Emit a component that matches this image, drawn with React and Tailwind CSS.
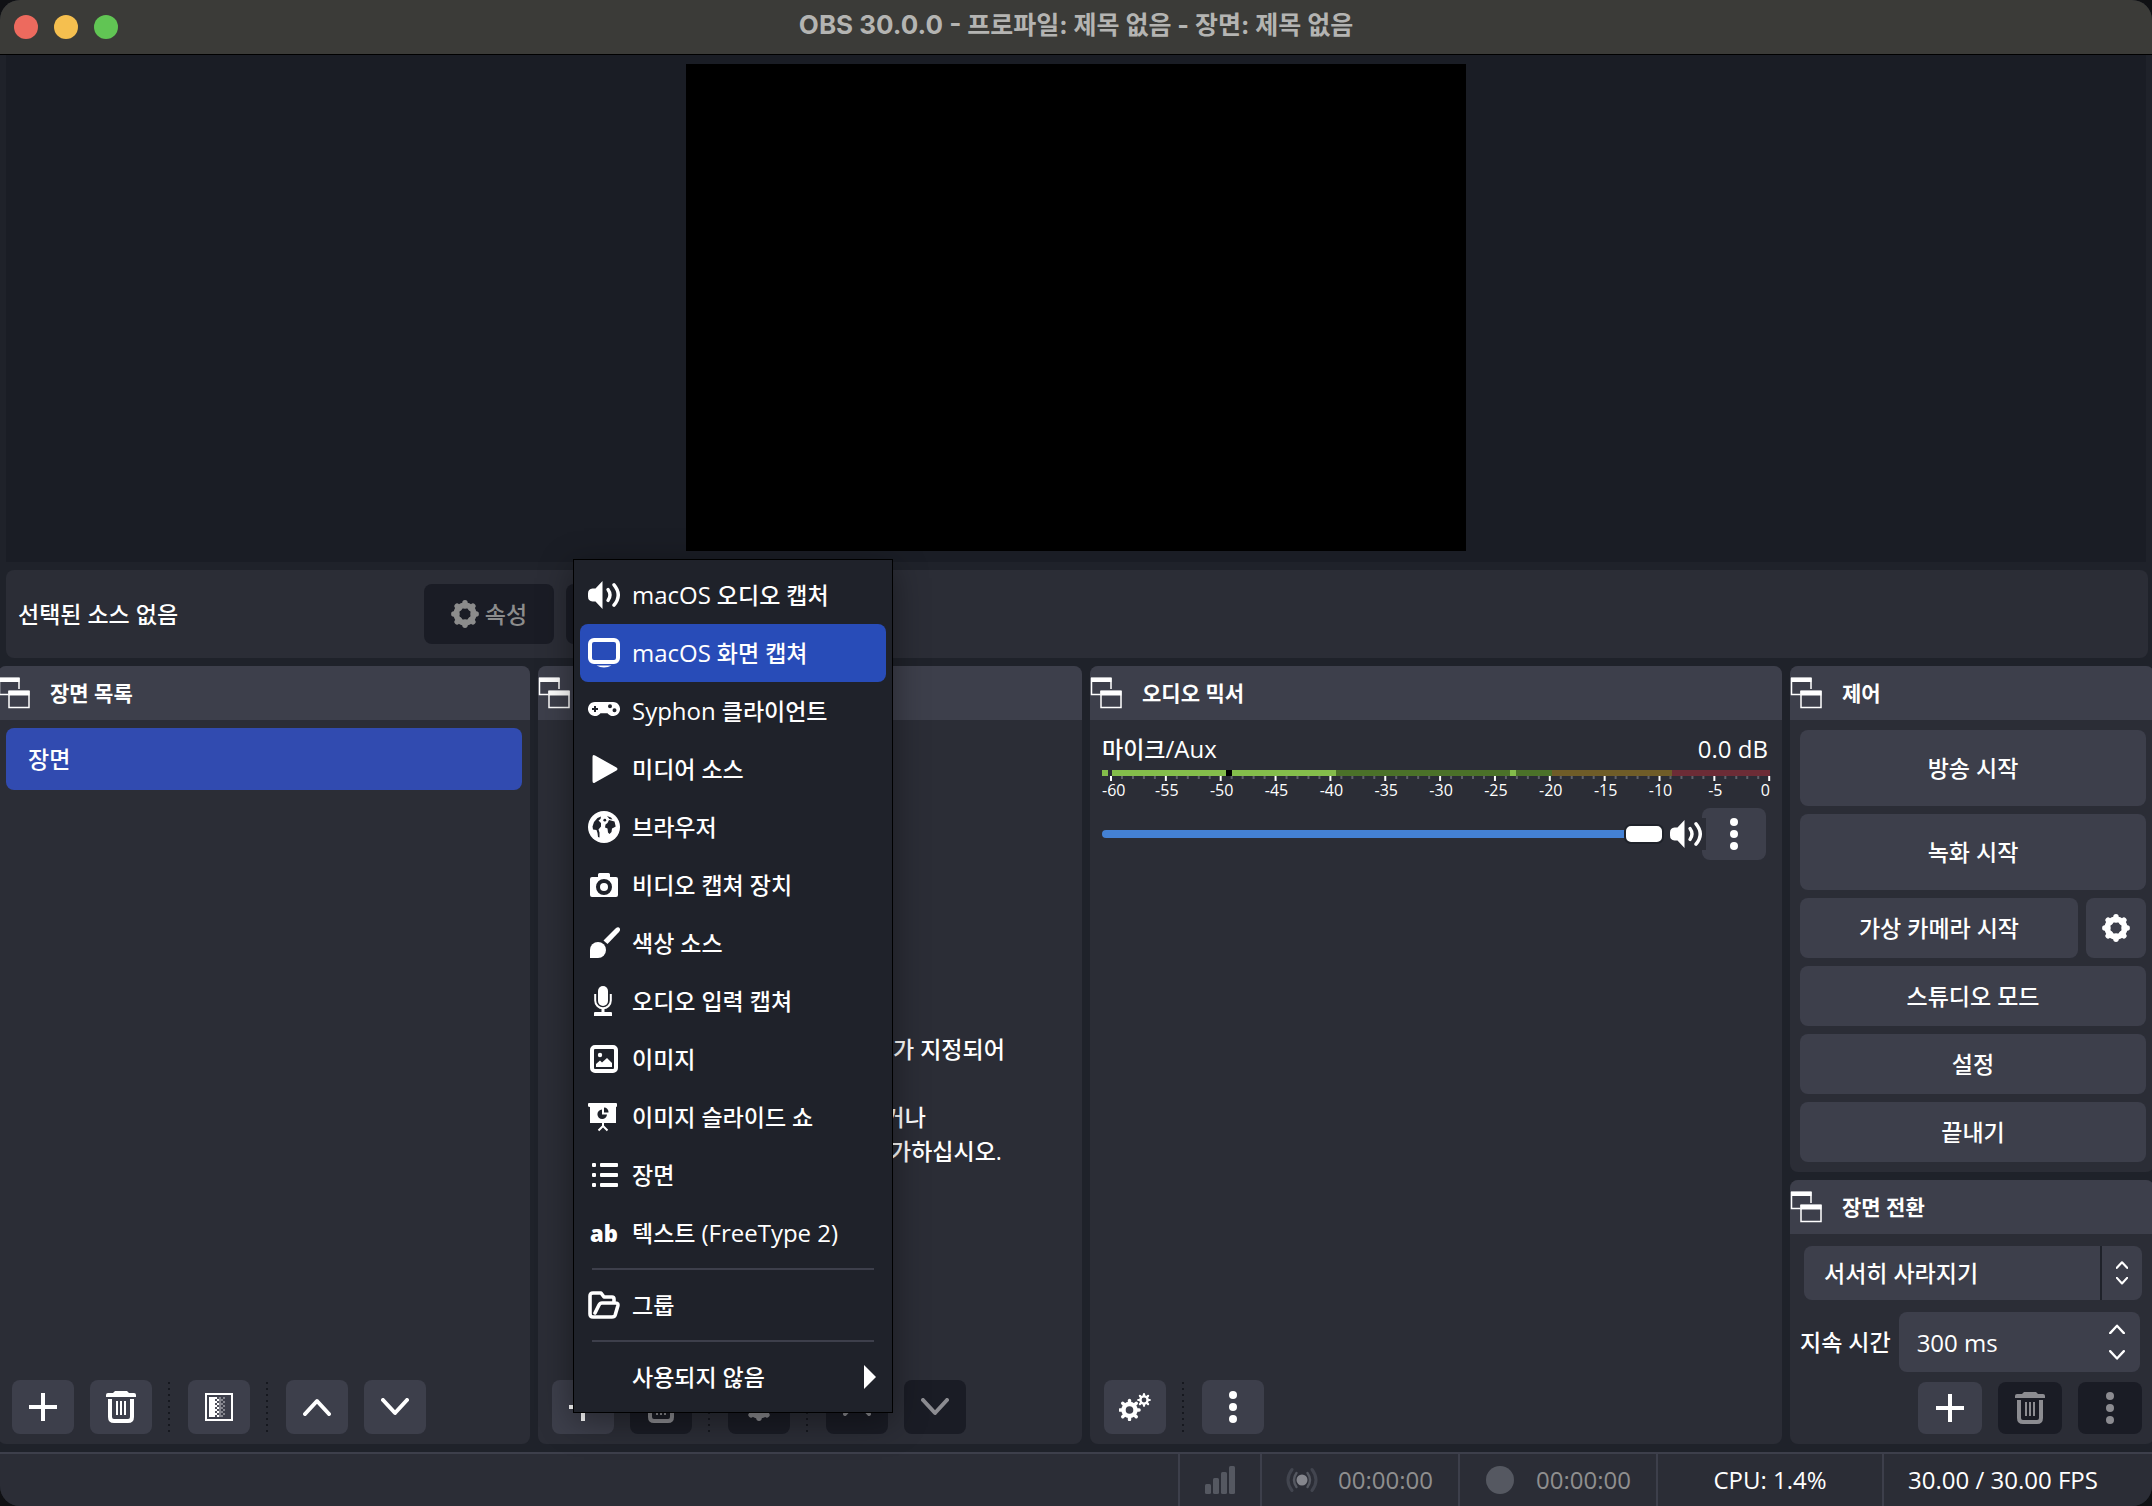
import React from "react";

const GEAR_ANGLES = [0, 45, 90, 135, 180, 225, 270, 315];

function Gear({ className }) {
  return (
    <svg className={className} viewBox="0 0 28 28" fill="none" stroke="currentColor">
      <circle cx="14" cy="14" r="8.75" strokeWidth="5.5" />
      {GEAR_ANGLES.map((a) => (
        <line key={a} x1="14" y1="2.8" x2="14" y2="6" strokeWidth="5.4" strokeLinecap="round" transform={`rotate(${a} 14 14)`} />
      ))}
    </svg>
  );
}

function Gears({ className }) {
  return (
    <svg className={className} viewBox="0 0 32 28" fill="none" stroke="currentColor">
      <circle cx="10.5" cy="17" r="6" strokeWidth="4.4" />
      {GEAR_ANGLES.map((a) => (
        <line key={a} x1="10.5" y1="7.4" x2="10.5" y2="10" strokeWidth="3.4" strokeLinecap="round" transform={`rotate(${a} 10.5 17)`} />
      ))}
      <circle cx="25" cy="7" r="3.6" strokeWidth="2.4" />
      {GEAR_ANGLES.map((a) => (
        <line key={a} x1="25" y1="1.2" x2="25" y2="3" strokeWidth="2.2" strokeLinecap="round" transform={`rotate(${a} 25 7)`} />
      ))}
    </svg>
  );
}

function Plus() {
  return (
    <svg className="size-7" viewBox="0 0 28 28" fill="currentColor">
      <path d="M12 0h4v12h12v4H16v12h-4V16H0v-4h12z" />
    </svg>
  );
}

function Trash() {
  return (
    <svg className="size-8" viewBox="0 0 32 32" fill="currentColor">
      <path d="M10 0h12l2 2h5q2 0 2 2v2H1V4q0-2 2-2h5z" />
      <path d="M5 8v18q0 4 4 4h14q4 0 4-4V8" fill="none" stroke="currentColor" strokeWidth="4" />
      <path d="M11 10h2v14h-2zM15 10h2v14h-2zM19 10h2v14h-2z" />
    </svg>
  );
}

function Transition() {
  const rows = [0, 1, 2, 3, 4, 5, 6, 7, 8, 9];
  return (
    <svg className="size-7" viewBox="0 0 28 28" fill="currentColor" shapeRendering="crispEdges">
      <path d="M1 1h26v26H1z" fill="none" stroke="currentColor" strokeWidth="2" />
      <path d="M4 4h6v20H4z" />
      <path d="M14 4h2v20h-2z" fill="#85868e" />
      {rows.map((r) => (
        <g key={r}>
          <rect x={r % 2 ? 12 : 10} y={4 + r * 2} width="2" height="2" />
          <rect x={r % 2 ? 10 : 12} y={4 + r * 2} width="2" height="2" fill="#4d4e59" />
          <rect x={r % 2 ? 16 : 18} y={4 + r * 2} width="2" height="2" fill="#85868e" />
        </g>
      ))}
    </svg>
  );
}

function Chevron({ up, className, width = 4 }) {
  return (
    <svg className={className} viewBox="0 0 28 18" fill="none" stroke="currentColor" strokeWidth={width} strokeLinecap="round" strokeLinejoin="round">
      <path d={up ? "M2 16 14 3 26 16" : "M2 2 14 15 26 2"} />
    </svg>
  );
}

function Kebab() {
  return (
    <svg className="h-8 w-2" viewBox="0 0 8 32" fill="currentColor">
      <circle cx="4" cy="4" r="4" />
      <circle cx="4" cy="16" r="4" />
      <circle cx="4" cy="28" r="4" />
    </svg>
  );
}

function Speaker() {
  return (
    <svg className="h-7 w-8" viewBox="0 0 32 28" fill="none" stroke="currentColor" strokeLinecap="round">
      <path d="M14.5 0v28L7.5 20.5H4.5Q0 20 0 15.500V12.500Q0 8 4.500 7.500H7.500z" fill="currentColor" stroke="none" />
      <path d="M20 8.500q4 5.500 0 11" strokeWidth="3.400" />
      <path d="M26 3.800q8.500 10.200 0 20.400" strokeWidth="3.400" />
    </svg>
  );
}

function DockIcon() {
  return (
    <svg className="h-8 w-8 shrink-0" viewBox="0 0 32 32" fill="none" stroke="#fff" strokeWidth="1.500">
      <path d="M10.500 17.500H1.500V1.500H21V12" />
      <path d="M1 .5h20.500V5H1z" fill="#fff" stroke="none" />
      <path d="M11 14.500h20v16H11z" />
      <path d="M10.500 13.500h21V18.500h-21z" fill="#fff" stroke="none" />
    </svg>
  );
}

const ICON = "h-8 w-8";

const icons = {
  monitor: (
    <svg className={ICON} viewBox="0 0 32 32">
      <rect x="2" y="3" width="28" height="22" rx="4" fill="none" stroke="#fff" strokeWidth="4" />
      <path d="M8.500 28.500h15q-3.500 2-7.500 2t-7.500-2z" fill="#fff" />
    </svg>
  ),
  gamepad: (
    <svg className={ICON} viewBox="0 0 32 32">
      <path fill="#fff" fillRule="evenodd" d="M7 7h18a7 7 0 1 1-5.500 11.300h-7A7 7 0 1 1 7 7zM6 11v2H4v2h2v2h2v-2h2v-2H8v-2zM22 9.200a2 2 0 1 0 0 4 2 2 0 0 0 0-4zM26.500 13.300a2 2 0 1 0 0 4 2 2 0 0 0 0-4z" />
    </svg>
  ),
  play: (
    <svg className={ICON} viewBox="0 0 32 32">
      <path fill="#fff" d="M4.500 4q0-3 2.600-1.500L28.500 14.500q2 1.500 0 3L7.100 29.500Q4.500 31 4.500 28z" />
    </svg>
  ),
  globe: (
    <svg className={ICON} viewBox="0 0 32 32">
      <circle cx="16" cy="16" r="16" fill="#fff" />
      <path fill="#1f222a" d="M4.500 15.500 6 11l3.500-4 3.500-1.500-.5 2.500-2 1.500 2.500 2.500v3.500l-2.500 3 1 3v5l-1.500-.5-.5-4-1-3-3.500-.5z" />
      <circle cx="16.800" cy="9.200" r="1.400" fill="#1f222a" />
      <path fill="#1f222a" d="m19 5 4 1.500 1.500 2-3-.5zM17.500 13.500l2-1.500 1.500-3 5.500 1.500 1.200 5-1.700 1-2 1-.5 3.500-2 2-1.500-1.500-.5-4-2.500-1z" />
    </svg>
  ),
  camera: (
    <svg className={ICON} viewBox="0 0 32 32">
      <path fill="#fff" fillRule="evenodd" d="M11.500 4h9q1.500 0 1.500 1.500V8h6q2 0 2 2v16q0 2-2 2H4q-2 0-2-2V10q0-2 2-2h6V5.500Q10 4 11.500 4zM16 10a8 8 0 1 0 0 16 8 8 0 0 0 0-16z" />
      <circle cx="16" cy="18" r="4" fill="#fff" />
    </svg>
  ),
  brush: (
    <svg className={ICON} viewBox="0 0 32 32" fill="#fff">
      <path d="M2 31V23a8 8 0 1 1 8 8z" />
      <path d="m15.500 13.500 12-12q3-2.500 4.300 0 .8 1.800-.8 3.500L19.500 17z" />
    </svg>
  ),
  mic: (
    <svg className={ICON} viewBox="0 0 32 32" fill="#fff">
      <rect x="10" y="1" width="10" height="20" rx="5" />
      <path d="M7.200 9v6.500a7.800 7.800 0 0 0 15.600 0V9" fill="none" stroke="#fff" strokeWidth="2" />
      <path d="M13.500 23h3v4H23q1 0 1 1v3H6v-3q0-1 1-1h6.500z" />
    </svg>
  ),
  image: (
    <svg className={ICON} viewBox="0 0 32 32" fill="#fff">
      <rect x="4" y="4" width="24" height="24" rx="3" fill="none" stroke="#fff" strokeWidth="4" />
      <circle cx="12" cy="12" r="2.200" />
      <path d="M8 24v-3l4-3.500 2 2 5-4.500 5 5v4z" />
    </svg>
  ),
  slides: (
    <svg className={ICON} viewBox="0 0 32 32" fill="#fff">
      <path d="M1 2h27q1 0 1 1v2q0 1-1 1v16H2V6Q0 6 0 5V3q0-1 1-1z" />
      <path d="M14 8.500a4.800 4.800 0 1 0 5 5h-5z" fill="#1f222a" />
      <path d="M16 6.500v5h4.500a4.500 4.500 0 0 0-4.500-5z" fill="#1f222a" />
      <path d="M15 21v5m0-1-4.500 4.500M15 25l4.500 4.500" fill="none" stroke="#fff" strokeWidth="2" />
    </svg>
  ),
  list: (
    <svg className={ICON} viewBox="0 0 32 32" fill="#fff">
      {[4, 14, 24].map((y) => (
        <g key={y}>
          <rect x="4" y={y} width="4" height="4" rx="1" />
          <rect x="12" y={y} width="18" height="4" rx="1" />
        </g>
      ))}
    </svg>
  ),
  folder: (
    <svg className={ICON} viewBox="0 0 32 32" fill="none" stroke="#fff" strokeWidth="3.600" strokeLinejoin="round">
      <path d="M26 13V10q0-2-2-2H16l-3-4H5Q2 4 2 7v18q0 3 3 3h19q2.500 0 3.200-2l2.600-9q.7-3-2-3H14q-2 0-3 2l-4 8" strokeLinecap="round" />
    </svg>
  ),
};

const LATIN = "text-[24px] font-normal";

const MENU = [
  { icon: <Speaker />, label: <><span className={LATIN}>macOS</span> 오디오 캡처</> },
  { icon: icons.monitor, label: <><span className={LATIN}>macOS</span> 화면 캡쳐</>, active: true },
  { icon: icons.gamepad, label: <><span className={LATIN}>Syphon</span> 클라이언트</> },
  { icon: icons.play, label: "미디어 소스" },
  { icon: icons.globe, label: "브라우저" },
  { icon: icons.camera, label: "비디오 캡쳐 장치" },
  { icon: icons.brush, label: "색상 소스" },
  { icon: icons.mic, label: "오디오 입력 캡쳐" },
  { icon: icons.image, label: "이미지" },
  { icon: icons.slides, label: "이미지 슬라이드 쇼" },
  { icon: icons.list, label: "장면" },
  { icon: <span aria-hidden="true" className="text-[22px] font-extrabold">ab</span>, label: <>텍스트 <span className={LATIN}>(FreeType 2)</span></> },
];

function MenuItem({ icon, label, active, submenu }) {
  return (
    <button
      role="menuitem"
      className={`flex h-[58px] w-full items-center gap-3 rounded-lg px-2 text-left text-white ${active ? "bg-[#284cb8]" : ""}`}
    >
      <span className="flex w-8 shrink-0 items-center justify-center">{icon}</span>
      <span className="flex-1 whitespace-nowrap">{label}</span>
      {submenu && (
        <svg className="mr-0.5 h-6 w-3" viewBox="0 0 12 24" fill="#fff">
          <path d="M0 0l12 12L0 24z" />
        </svg>
      )}
    </button>
  );
}

function SourceMenu() {
  return (
    <div
      role="menu"
      className="absolute bottom-[31px] left-[35px] z-20 w-[320px] border border-black bg-[#1f222a] p-1.5 shadow-[0_8px_32px_rgba(0,0,0,0.4)]"
    >
      {MENU.map((m, i) => (
        <MenuItem key={i} {...m} />
      ))}
      <hr className="mx-3 my-1.5 border-t-2 border-[#3d3f4b]" />
      <MenuItem icon={icons.folder} label="그룹" />
      <hr className="mx-3 my-1.5 border-t-2 border-[#3d3f4b]" />
      <MenuItem label="사용되지 않음" submenu />
    </div>
  );
}

function ToolButton({ label, disabled, className = "h-[54px] w-[62px]", children }) {
  return (
    <button
      aria-label={label}
      disabled={disabled}
      className={`flex shrink-0 items-center justify-center rounded-lg ${className} ${disabled ? "bg-[#1a1c25] text-[#8c8c91]" : "bg-[#3d3f4b] text-white"}`}
    >
      {children}
    </button>
  );
}

function Dots() {
  return (
    <svg className="h-[50px] w-1 shrink-0" viewBox="0 0 4 50" shapeRendering="crispEdges">
      <path d="M1 0V50" stroke="#16181f" strokeWidth="2" strokeDasharray="2 4" />
    </svg>
  );
}

function Dock({ title, className = "", children }) {
  return (
    <section className={`flex min-w-0 flex-col rounded-lg bg-[#2b2d36] ${className}`}>
      <header className="flex h-[54px] shrink-0 items-center gap-5 rounded-t-lg bg-[#3d3f4b]">
        <DockIcon />
        <h2 className="text-[21px] font-bold">{title}</h2>
      </header>
      {children}
    </section>
  );
}

const SEGMENTS = [
  [6, "bg-[#84bd4b]"],
  [4, "bg-[#2b2d36]"],
  [114, "bg-[#84bd4b]"],
  [6, "bg-black"],
  [104, "bg-[#84bd4b]"],
  [174, "bg-[#4b7129]"],
  [6, "bg-[#84bd4b]"],
  [36, "bg-[#4b7129]"],
  [120, "bg-[#6f5c28]"],
  [98, "bg-[#6c2c36]"],
];

function Meter() {
  const ticks = Array.from({ length: 61 }, (_, i) => i);
  const pos = (i, shift = 0) => `${(((9 + shift + i * 10.97) / 668) * 100).toFixed(3)}%`;
  return (
    <div>
      <div className="flex h-1.5">
        {SEGMENTS.map(([w, c], i) => (
          <div key={i} className={c} style={{ flex: w }} />
        ))}
      </div>
      <svg className="h-7 w-full overflow-visible font-normal" fontFamily="Open Sans" fontSize="16">
        {ticks.map((i) => (
          <line key={i} x1={pos(i)} x2={pos(i)} y1="0" y2={i % 5 ? 3 : 5} stroke={i % 5 ? "#60626b" : "#fff"} strokeWidth="2" />
        ))}
        {ticks.filter((i) => i % 5 === 0).map((i) => (
          <text key={i} x={i === 0 ? "0" : i === 60 ? "100%" : pos(i, 1)} y="20" fill="#fff" textAnchor={i === 0 ? "start" : i === 60 ? "end" : "middle"}>
            {i - 60}
          </text>
        ))}
      </svg>
    </div>
  );
}

function ControlButton({ tall, children }) {
  return (
    <button className={`w-full rounded-lg bg-[#3d3f4b] ${tall ? "h-[76px]" : "h-[60px]"}`}>{children}</button>
  );
}

export default function App() {
  return (
    <div className="h-screen bg-[#101114]">
      <div className="flex h-full flex-col overflow-hidden rounded-[20px] bg-[#1f222a] font-['Open_Sans','Noto_Sans_CJK_KR',sans-serif] text-[23px] leading-[34px] font-medium text-white">
        <header className="flex h-[55px] shrink-0 items-center border-b border-black bg-[#3b3b38] px-3.5">
          <div className="flex flex-1 gap-4">
            <button aria-label="닫기" className="size-6 rounded-full bg-[#ed6a5e]" />
            <button aria-label="최소화" className="size-6 rounded-full bg-[#f5bf4f]" />
            <button aria-label="확대" className="size-6 rounded-full bg-[#61c554]" />
          </div>
          <h1 className="pb-1 font-['Inter','Noto_Sans_CJK_KR',sans-serif] text-[25px] font-bold text-[#b4b4b2]">
            <span className="text-[26px]">OBS 30.0.0 -</span> 프로파일: 제목 없음 - 장면: 제목 없음
          </h1>
          <div className="flex-1" />
        </header>

        <main className="mx-1.5 flex min-h-0 flex-[487_1_0px] justify-center bg-[#1a1d25] pt-[9px] pb-[11px]">
          <div className="aspect-[780/487] h-full bg-black" />
        </main>

        <div className="mr-1 ml-1.5 mt-2 flex h-[88px] shrink-0 items-center gap-3 rounded-lg bg-[#2b2d36] px-3">
          <span className="w-[394px]">선택된 소스 없음</span>
          <button disabled className="flex h-[60px] w-[130px] items-center justify-center gap-1.5 rounded-lg bg-[#1a1c25] text-[#8c8c8c]">
            <Gear className="size-7" />
            속성
          </button>
          <button disabled className="flex h-[60px] w-[130px] items-center justify-center rounded-lg bg-[#1a1c25] text-[#8c8c8c]">
            필터
          </button>
        </div>

        <div className="-mx-0.5 my-2 grid min-h-0 flex-[778_1_0px] grid-cols-[532fr_544fr_692fr_364fr] gap-2">
          <Dock title="장면 목록">
            <ul className="flex-1 p-2">
              <li>
                <button className="block h-[62px] w-full rounded-lg bg-[#314bb0] px-[22px] text-left">장면</button>
              </li>
            </ul>
            <div className="flex items-center gap-4 px-3.5 pb-2.5">
              <ToolButton label="장면 추가"><Plus /></ToolButton>
              <ToolButton label="장면 제거"><Trash /></ToolButton>
              <Dots />
              <ToolButton label="장면 필터"><Transition /></ToolButton>
              <Dots />
              <ToolButton label="위로"><Chevron up className="w-7" /></ToolButton>
              <ToolButton label="아래로"><Chevron className="w-7" /></ToolButton>
            </div>
          </Dock>

          <Dock title="소스 목록" className="relative">
            <div className="flex flex-1 flex-col justify-center pt-25 text-center">
              <p>지금 선택된 장면에 어떤 소스가 지정되어</p>
              <p>있지 않습니다.</p>
              <p>아래 '+' 버튼을 누르거나</p>
              <p>여기를 우클릭하여 소스를 추가하십시오.</p>
            </div>
            <div className="flex items-center gap-4 px-3.5 pb-2.5">
              <ToolButton label="소스 추가"><Plus /></ToolButton>
              <ToolButton label="소스 제거" disabled><Trash /></ToolButton>
              <Dots />
              <ToolButton label="소스 속성" disabled><Gear className="size-7" /></ToolButton>
              <Dots />
              <ToolButton label="위로" disabled><Chevron up className="w-7" /></ToolButton>
              <ToolButton label="아래로" disabled><Chevron className="w-7" /></ToolButton>
            </div>
            <SourceMenu />
          </Dock>

          <Dock title="오디오 믹서">
            <div className="flex-1 px-3 pt-3">
              <div className="flex justify-between pr-0.5 pb-1">
                <label htmlFor="mic">마이크<span className={LATIN}>/Aux</span></label>
                <span className={LATIN}>0.0 dB</span>
              </div>
              <Meter />
              <div className="flex items-center pt-1 pr-1">
                <input
                  id="mic"
                  type="range"
                  defaultValue="100"
                  className="h-5 min-w-0 flex-1 appearance-none bg-transparent [&::-webkit-slider-runnable-track]:h-2 [&::-webkit-slider-runnable-track]:rounded-full [&::-webkit-slider-runnable-track]:bg-[#4481d4] [&::-webkit-slider-thumb]:-mt-1.5 [&::-webkit-slider-thumb]:h-5 [&::-webkit-slider-thumb]:w-10 [&::-webkit-slider-thumb]:appearance-none [&::-webkit-slider-thumb]:rounded-[7px] [&::-webkit-slider-thumb]:border-2 [&::-webkit-slider-thumb]:border-[#1f222a] [&::-webkit-slider-thumb]:bg-white"
                />
                <button aria-label="음소거" className="z-10 -mr-1 ml-1 flex h-8 w-[38px] items-center bg-[#2b2d36] pl-0.5">
                  <Speaker />
                </button>
                <ToolButton label="오디오 메뉴" className="h-[52px] w-16"><Kebab /></ToolButton>
              </div>
            </div>
            <div className="flex items-center gap-4 px-3.5 pb-2.5">
              <ToolButton label="고급 오디오 속성"><Gears className="h-7 w-8" /></ToolButton>
              <Dots />
              <ToolButton label="오디오 믹서 메뉴"><Kebab /></ToolButton>
            </div>
          </Dock>

          <div className="flex min-w-0 flex-col gap-2">
            <Dock title="제어">
              <div className="flex flex-col gap-2 py-2.5 pr-2 pl-2.5">
                <ControlButton tall>방송 시작</ControlButton>
                <ControlButton tall>녹화 시작</ControlButton>
                <div className="flex gap-2">
                  <ControlButton>가상 카메라 시작</ControlButton>
                  <ToolButton label="가상 카메라 설정" className="size-[60px]"><Gear className="size-7" /></ToolButton>
                </div>
                <ControlButton>스튜디오 모드</ControlButton>
                <ControlButton>설정</ControlButton>
                <ControlButton>끝내기</ControlButton>
              </div>
            </Dock>
            <Dock title="장면 전환" className="flex-1">
              <div className="flex flex-1 flex-col pt-3 pr-3 pl-2.5">
                <div className="relative ml-1">
                  <select aria-label="장면 전환" className="h-[54px] w-full appearance-none rounded-lg bg-[#3d3f4b] px-5">
                    <option>서서히 사라지기</option>
                  </select>
                  <div className="pointer-events-none absolute inset-y-0 right-0 flex w-[42px] flex-col items-center justify-center gap-2 border-l-2 border-[#1f222a]">
                    <Chevron up className="w-3" width={5} />
                    <Chevron className="w-3" width={5} />
                  </div>
                </div>
                <div className="mt-3 mr-0.5 flex items-center gap-2">
                  <label htmlFor="duration" className="shrink-0">지속 시간</label>
                  <div className="relative min-w-0 flex-1">
                    <input id="duration" defaultValue="300 ms" className="h-[60px] w-full rounded-lg bg-[#3d3f4b] pl-[18px] text-[24px] font-normal" />
                    <div className="absolute inset-y-0 right-[15px] flex flex-col items-center justify-center gap-4">
                      <button aria-label="늘리기"><Chevron up className="w-4" width={4} /></button>
                      <button aria-label="줄이기"><Chevron className="w-4" width={4} /></button>
                    </div>
                  </div>
                </div>
                <div className="mt-2.5 flex justify-end gap-4">
                  <ToolButton label="전환 추가" className="h-[52px] w-16"><Plus /></ToolButton>
                  <ToolButton label="전환 제거" disabled className="h-[52px] w-16"><Trash /></ToolButton>
                  <ToolButton label="전환 메뉴" disabled className="h-[52px] w-16"><Kebab /></ToolButton>
                </div>
              </div>
            </Dock>
          </div>
        </div>

        <footer className="flex h-[54px] shrink-0 items-stretch border-t-2 border-[#3d3f4b] bg-[#2b2d36] text-[24px] font-normal">
          <div className="flex-1" />
          <div className="flex w-[82px] items-center justify-center border-l-2 border-[#3d3f4b]">
            <svg className="h-7 w-[30px]" viewBox="0 0 30 28" fill="#555861">
              <rect x="0" y="18" width="6" height="10" rx="1.500" />
              <rect x="8" y="12" width="6" height="16" rx="1.500" />
              <rect x="16" y="6" width="6" height="22" rx="1.500" />
              <rect x="24" y="0" width="6" height="28" rx="1.500" />
            </svg>
          </div>
          <div className="flex w-[198px] items-center gap-5 border-l-2 border-[#3d3f4b] pl-6 text-[#8f8f8f]">
            <svg className="h-7 w-8" viewBox="0 0 32 28" fill="none" strokeLinecap="round">
              <circle cx="16" cy="14" r="5.500" fill="#85868d" />
              <path d="M10.500 7q-5 7 0 14M21.500 7q5 7 0 14" stroke="#555861" strokeWidth="2.400" />
              <path d="M6 3.500q-8 10.500 0 21M26 3.500q8 10.500 0 21" stroke="#42454f" strokeWidth="3" />
            </svg>
            00:00:00
          </div>
          <div className="flex w-[198px] items-center gap-[22px] border-l-2 border-[#3d3f4b] pl-[26px] text-[#8f8f8f]">
            <span className="size-7 rounded-full bg-[#555861]" />
            00:00:00
          </div>
          <div className="flex w-[226px] items-center justify-center border-l-2 border-[#3d3f4b]">CPU: 1.4%</div>
          <div className="flex w-[270px] items-center border-l-2 border-[#3d3f4b] pl-6">30.00 / 30.00 FPS</div>
        </footer>
      </div>
    </div>
  );
}
